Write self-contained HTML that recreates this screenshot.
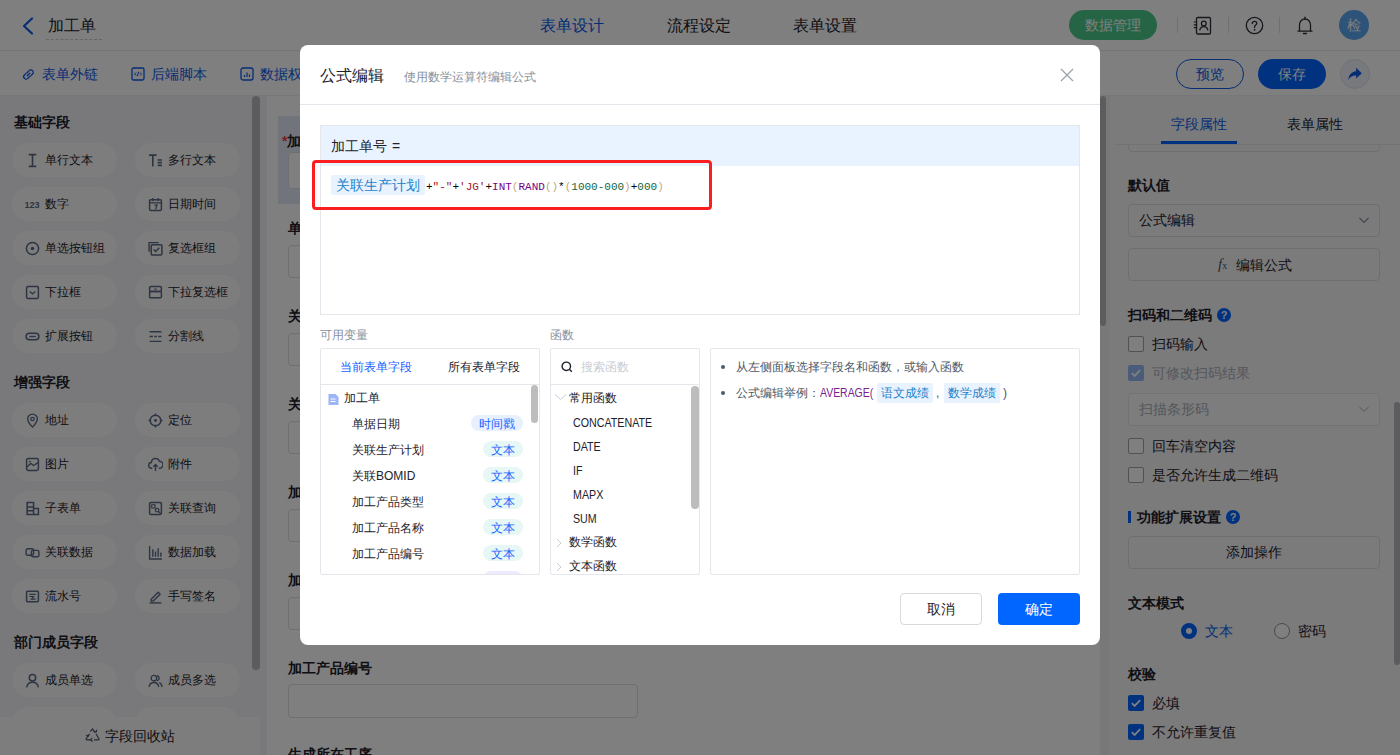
<!DOCTYPE html>
<html><head><meta charset="utf-8">
<style>
*{box-sizing:border-box;margin:0;padding:0}
html,body{width:1400px;height:755px;overflow:hidden;background:#fff;font-family:"Liberation Sans",sans-serif;color:#1d2129}
.a{position:absolute;white-space:nowrap}
.t14{font-size:14px;line-height:20px}
.t13{font-size:13px;line-height:18px}
.t12{font-size:12px;line-height:17px;margin-top:1px}
.fn{transform:scaleX(.89);transform-origin:0 0;margin-top:1px}
.t16{font-size:16px;line-height:22px}
#hdr{position:absolute;left:0;top:0;width:1400px;height:51px;background:#fff;border-bottom:1px solid #e8e9ec}
#tb{position:absolute;left:0;top:51px;width:1400px;height:45px;background:#fff;border-bottom:1px solid #eef0f2}
#left{position:absolute;left:0;top:96px;width:267px;height:659px;background:#f2f3f6}
#mid{position:absolute;left:267px;top:96px;width:833px;height:659px;background:#fff}
#card{position:absolute;left:278px;top:96px;width:822px;height:659px;background:#fff}
#right{position:absolute;left:1110px;top:96px;width:290px;height:659px;background:#f6f7f9}
#ov{position:absolute;left:0;top:0;width:1400px;height:755px;background:rgba(0,0,0,.5)}
#modal{position:absolute;left:300px;top:45px;width:800px;height:600px;background:#fff;border-radius:8px;overflow:hidden}
.blue{color:#0a5ae8}
.pill{position:absolute;height:34px;width:105px;border-radius:17px;background:#fbfbfc;font-size:12px;line-height:34px;color:#1d2129}
.pill svg{position:absolute;left:12.5px;top:9.5px}
.pill span{position:absolute;left:33px;top:0}
.sec{position:absolute;left:14px;font-size:14px;font-weight:bold;line-height:20px;color:#1d2129}
</style></head><body>
<!-- HEADER -->
<div id="hdr">
  <svg class="a" style="left:20px;top:16px" width="16" height="20" viewBox="0 0 16 20"><polyline points="12,2.5 4,10 12,17.5" fill="none" stroke="#0a5ae8" stroke-width="2.2" stroke-linecap="round" stroke-linejoin="round"/></svg>
  <div class="a t16" style="left:48px;top:15px;color:#1d2129">加工单</div>
  <div class="a" style="left:46px;top:39px;width:56px;border-top:1px dashed #c9cdd4"></div>
  <div class="a t16 blue" style="left:540px;top:15px">表单设计</div>
  <div class="a t16" style="left:667px;top:15px">流程设定</div>
  <div class="a t16" style="left:793px;top:15px">表单设置</div>
  <div class="a" style="left:1069px;top:10px;width:88px;height:30px;border-radius:15px;background:#4acb8b;color:#fff;font-size:14px;line-height:30px;text-align:center">数据管理</div>
  <div class="a" style="left:1177px;top:17px;width:1px;height:16px;background:#dcdfe4"></div>
  <div class="a" style="left:1228px;top:17px;width:1px;height:16px;background:#dcdfe4"></div>
  <div class="a" style="left:1279px;top:17px;width:1px;height:16px;background:#dcdfe4"></div>
  <svg class="a" style="left:1193px;top:16px" width="20" height="20" viewBox="0 0 20 20"><rect x="3.5" y="1.5" width="14" height="16.5" rx="1.2" fill="none" stroke="#2b2f36" stroke-width="1.3"/><path d="M0.8 6h3.4M0.8 8.8h3.4M0.8 11.6h3.4" stroke="#2b2f36" stroke-width="1.2"/><circle cx="10.8" cy="7.5" r="2.4" fill="none" stroke="#2b2f36" stroke-width="1.3"/><path d="M6.7 14.3c.5-2.4 2.2-3.6 4.1-3.6s3.6 1.2 4.1 3.6" fill="none" stroke="#2b2f36" stroke-width="1.3"/></svg>
  <svg class="a" style="left:1244px;top:16px" width="20" height="20" viewBox="0 0 20 20"><circle cx="10.5" cy="9.5" r="8.2" fill="none" stroke="#2b2f36" stroke-width="1.3"/><path d="M8.2 7.6c0-1.4 1-2.3 2.3-2.3s2.3.9 2.3 2.1c0 1.6-2.2 1.8-2.2 3.4v.7" fill="none" stroke="#2b2f36" stroke-width="1.3" stroke-linecap="round"/><circle cx="10.6" cy="13.8" r=".9" fill="#2b2f36"/></svg>
  <svg class="a" style="left:1295px;top:16px" width="20" height="20" viewBox="0 0 20 20"><path d="M4.5 15V8.8C4.5 5.6 6.8 3 10 3s5.5 2.6 5.5 5.8V15M3 15.2h14" fill="none" stroke="#2b2f36" stroke-width="1.3" stroke-linecap="round"/><path d="M10 1.2v1.6" stroke="#2b2f36" stroke-width="1.3" stroke-linecap="round"/><path d="M8.5 17.5h3" stroke="#2b2f36" stroke-width="1.3" stroke-linecap="round"/></svg>
  <div class="a" style="left:1339px;top:10px;width:30px;height:30px;border-radius:15px;background:#5aa6f0;color:#fff;font-size:14px;line-height:30px;text-align:center">检</div>
</div>
<!-- TOOLBAR -->
<div id="tb">
  <svg class="a" style="left:21px;top:16px" width="15" height="15" viewBox="0 0 15 15"><path d="M6.2 8.8l2.6-2.6M5.3 6.1L3.4 8a2.4 2.4 0 003.4 3.4l1.9-1.9M9.7 8.9l1.9-1.9a2.4 2.4 0 00-3.4-3.4L6.3 5.5" fill="none" stroke="#0a5ae8" stroke-width="1.3" stroke-linecap="round"/></svg>
  <div class="a t14 blue" style="left:42px;top:13px">表单外链</div>
  <svg class="a" style="left:131px;top:16px" width="14" height="14" viewBox="0 0 14 14"><rect x="1" y="1" width="12" height="12" rx="1.5" fill="none" stroke="#0a5ae8" stroke-width="1.3"/><path d="M5 5.5L3.5 7 5 8.5M9 5.5l1.5 1.5L9 8.5M7.7 4.8L6.3 9.2" fill="none" stroke="#0a5ae8" stroke-width="1"/></svg>
  <div class="a t14 blue" style="left:151px;top:13px">后端脚本</div>
  <svg class="a" style="left:240px;top:16px" width="14" height="14" viewBox="0 0 14 14"><rect x="1" y="1" width="12" height="12" rx="2" fill="none" stroke="#0a5ae8" stroke-width="1.3"/><path d="M4.5 10V8M7 10V5.5M9.5 10V7.5" stroke="#0a5ae8" stroke-width="1.2"/></svg>
  <div class="a t14 blue" style="left:260px;top:13px">数据权限</div>
  <div class="a" style="left:1176px;top:8px;width:68px;height:30px;border-radius:15px;border:1px solid #0a5ae8;color:#0a5ae8;font-size:14px;line-height:28px;text-align:center">预览</div>
  <div class="a" style="left:1258px;top:8px;width:68px;height:30px;border-radius:15px;background:#0064ff;color:#fff;font-size:14px;line-height:30px;text-align:center">保存</div>
  <div class="a" style="left:1340px;top:8px;width:30px;height:30px;border-radius:15px;border:1px solid #dde3ee;background:#eef2f8"></div>
  <svg class="a" style="left:1346px;top:14px" width="18" height="18" viewBox="0 0 16 16"><path d="M9 2.5l5 4.8-5 4.6V9.3C5.5 9.2 3.4 10.5 2 13.5 2.3 9 4.8 5.9 9 5.5z" fill="#0a5ae8"/></svg>
</div>
<div id="left">
  <div class="sec" style="top:16px">基础字段</div>
  <div class="sec" style="top:276px">增强字段</div>
  <div class="sec" style="top:536px">部门成员字段</div>
</div>
<div id="pills"><div class="pill" style="left:12px;top:143px"><svg width="15" height="15" viewBox="0 0 14 14"><path d="M3.5 1.5h7M3.5 12.5h7M7 1.5v11" stroke="#5a6a84" stroke-width="1.5" fill="none"/></svg><span>单行文本</span></div>
<div class="pill" style="left:135px;top:143px"><svg width="15" height="15" viewBox="0 0 14 14"><path d="M1 2h7M4.5 2v10.5M9 6.5h4M9 9h4M9 11.5h4" stroke="#5a6a84" stroke-width="1.5" fill="none"/></svg><span>多行文本</span></div>
<div class="pill" style="left:12px;top:187px"><svg width="15" height="15" viewBox="0 0 14 14"><text x="-0.5" y="10" font-family="Liberation Sans" font-weight="bold" font-size="8.5" fill="#5a6a84">123</text></svg><span>数字</span></div>
<div class="pill" style="left:135px;top:187px"><svg width="15" height="15" viewBox="0 0 14 14"><rect x="1.5" y="2.5" width="11" height="10" rx="1" stroke="#5a6a84" stroke-width="1.4" fill="none"/><path d="M4.5 1v3M9.5 1v3M1.5 5.5h11M6 7.5h2.5l-1.5 4" stroke="#5a6a84" stroke-width="1.2" fill="none"/></svg><span>日期时间</span></div>
<div class="pill" style="left:12px;top:231px"><svg width="15" height="15" viewBox="0 0 14 14"><circle cx="7" cy="7" r="5.7" stroke="#5a6a84" stroke-width="1.4" fill="none"/><circle cx="7" cy="7" r="1.6" fill="#5a6a84"/></svg><span>单选按钮组</span></div>
<div class="pill" style="left:135px;top:231px"><svg width="15" height="15" viewBox="0 0 14 14"><path d="M1 10V1.5h9" stroke="#5a6a84" stroke-width="1.3" fill="none"/><rect x="3" y="3.5" width="10" height="9.5" rx="1" stroke="#5a6a84" stroke-width="1.4" fill="none"/><path d="M5.3 8l1.8 1.8 3.5-3.6" stroke="#5a6a84" stroke-width="1.3" fill="none"/></svg><span>复选框组</span></div>
<div class="pill" style="left:12px;top:275px"><svg width="15" height="15" viewBox="0 0 14 14"><rect x="1.5" y="1.5" width="11" height="11" rx="1" stroke="#5a6a84" stroke-width="1.4" fill="none"/><path d="M4.5 6l2.5 2.3L9.5 6" stroke="#5a6a84" stroke-width="1.3" fill="none"/></svg><span>下拉框</span></div>
<div class="pill" style="left:135px;top:275px"><svg width="15" height="15" viewBox="0 0 14 14"><rect x="1.5" y="1.5" width="11" height="4.5" rx="1" stroke="#5a6a84" stroke-width="1.4" fill="none"/><rect x="1.5" y="6" width="11" height="6" rx="1" stroke="#5a6a84" stroke-width="1.4" fill="none"/><path d="M6 3.3l1 1 1-1" stroke="#5a6a84" stroke-width="1" fill="none"/></svg><span>下拉复选框</span></div>
<div class="pill" style="left:12px;top:319px"><svg width="15" height="15" viewBox="0 0 14 14"><rect x="1" y="4" width="12" height="6" rx="3" stroke="#5a6a84" stroke-width="1.4" fill="none"/><path d="M4 7h6" stroke="#5a6a84" stroke-width="1.3"/></svg><span>扩展按钮</span></div>
<div class="pill" style="left:135px;top:319px"><svg width="15" height="15" viewBox="0 0 14 14"><path d="M1.5 2.5h11M1.5 11.5h11M1.5 7h3M5.8 7h2.5M9.5 7h3" stroke="#5a6a84" stroke-width="1.3" fill="none"/></svg><span>分割线</span></div>
<div class="pill" style="left:12px;top:403px"><svg width="15" height="15" viewBox="0 0 14 14"><path d="M7 13.2C4 10 2.5 7.8 2.5 5.5a4.5 4.5 0 019 0C11.5 7.8 10 10 7 13.2z" stroke="#5a6a84" stroke-width="1.3" fill="none"/><circle cx="7" cy="5.6" r="1.6" stroke="#5a6a84" stroke-width="1.2" fill="none"/></svg><span>地址</span></div>
<div class="pill" style="left:135px;top:403px"><svg width="15" height="15" viewBox="0 0 14 14"><circle cx="7" cy="7" r="5" stroke="#5a6a84" stroke-width="1.4" fill="none"/><circle cx="7" cy="7" r="1.3" fill="#5a6a84"/><path d="M7 0.5v2.5M7 11v2.5M0.5 7H3M11 7h2.5" stroke="#5a6a84" stroke-width="1.3"/></svg><span>定位</span></div>
<div class="pill" style="left:12px;top:447px"><svg width="15" height="15" viewBox="0 0 14 14"><rect x="1.5" y="1.5" width="11" height="11" rx="1.5" stroke="#5a6a84" stroke-width="1.4" fill="none"/><path d="M2 9l3.5-3 2.5 2 4.5-3" stroke="#5a6a84" stroke-width="1.2" fill="none"/><circle cx="4.5" cy="4.3" r="0.9" fill="#5a6a84"/></svg><span>图片</span></div>
<div class="pill" style="left:135px;top:447px"><svg width="15" height="15" viewBox="0 0 14 14"><path d="M4 10.5H3.5a2.7 2.7 0 01-.3-5.4A3.8 3.8 0 0110.6 4a3.2 3.2 0 01.2 6.5H10" stroke="#5a6a84" stroke-width="1.3" fill="none"/><path d="M7 13V7.3M5 9l2-2 2 2" stroke="#5a6a84" stroke-width="1.3" fill="none"/></svg><span>附件</span></div>
<div class="pill" style="left:12px;top:491px"><svg width="15" height="15" viewBox="0 0 14 14"><path d="M2 1.5h6v11H2zM8 7h4.5v5.5H8M2 5.5h6M2 9h6" stroke="#5a6a84" stroke-width="1.4" fill="none"/></svg><span>子表单</span></div>
<div class="pill" style="left:135px;top:491px"><svg width="15" height="15" viewBox="0 0 14 14"><rect x="1.5" y="1.5" width="11" height="11" rx="1" stroke="#5a6a84" stroke-width="1.4" fill="none"/><path d="M3.5 3.5h3v3h-3z" stroke="#5a6a84" stroke-width="1.1" fill="none"/><circle cx="8.5" cy="8.5" r="1.7" stroke="#5a6a84" stroke-width="1.1" fill="none"/><path d="M9.8 9.8l2 2" stroke="#5a6a84" stroke-width="1.1"/></svg><span>关联查询</span></div>
<div class="pill" style="left:12px;top:535px"><svg width="15" height="15" viewBox="0 0 14 14"><rect x="1" y="3.5" width="7" height="6" rx="1.5" stroke="#5a6a84" stroke-width="1.3" fill="none"/><rect x="6" y="5" width="7" height="6" rx="1.5" stroke="#5a6a84" stroke-width="1.3" fill="none"/></svg><span>关联数据</span></div>
<div class="pill" style="left:135px;top:535px"><svg width="15" height="15" viewBox="0 0 14 14"><path d="M1.5 1v12h11.5M4.5 4v7M7 6v5M9.5 3v8M12 7v4" stroke="#5a6a84" stroke-width="1.3" fill="none"/></svg><span>数据加载</span></div>
<div class="pill" style="left:12px;top:579px"><svg width="15" height="15" viewBox="0 0 14 14"><rect x="1.5" y="2" width="11" height="10" rx="1" stroke="#5a6a84" stroke-width="1.4" fill="none"/><path d="M4 5h6M4 7h4l-2 2.5h4" stroke="#5a6a84" stroke-width="1.1" fill="none"/></svg><span>流水号</span></div>
<div class="pill" style="left:135px;top:579px"><svg width="15" height="15" viewBox="0 0 14 14"><path d="M3 9.5l6.5-6.5 1.8 1.8-6.5 6.5H3z" stroke="#5a6a84" stroke-width="1.3" fill="none"/><path d="M1.5 13h11" stroke="#5a6a84" stroke-width="1.3"/></svg><span>手写签名</span></div>
<div class="pill" style="left:12px;top:663px"><svg width="15" height="15" viewBox="0 0 14 14"><circle cx="7" cy="4.5" r="3" stroke="#5a6a84" stroke-width="1.4" fill="none"/><path d="M1.5 13.5c.5-3 2.7-4.8 5.5-4.8s5 1.8 5.5 4.8" stroke="#5a6a84" stroke-width="1.4" fill="none"/></svg><span>成员单选</span></div>
<div class="pill" style="left:135px;top:663px"><svg width="15" height="15" viewBox="0 0 14 14"><circle cx="5.5" cy="4.8" r="2.6" stroke="#5a6a84" stroke-width="1.3" fill="none"/><path d="M1 13c.4-2.7 2.2-4.2 4.5-4.2S9.6 10.3 10 13M8.5 2.3a2.6 2.6 0 010 5M10.5 8.9c1.5.6 2.4 2 2.6 4" stroke="#5a6a84" stroke-width="1.3" fill="none"/></svg><span>成员多选</span></div>
<div class="pill" style="left:12px;top:707px"><svg width="15" height="15" viewBox="0 0 14 14"><circle cx="7" cy="4.5" r="3" stroke="#5a6a84" stroke-width="1.4" fill="none"/><path d="M1.5 13.5c.5-3 2.7-4.8 5.5-4.8s5 1.8 5.5 4.8" stroke="#5a6a84" stroke-width="1.4" fill="none"/></svg><span>部门单选</span></div>
<div class="pill" style="left:135px;top:707px"><svg width="15" height="15" viewBox="0 0 14 14"><circle cx="5.5" cy="4.8" r="2.6" stroke="#5a6a84" stroke-width="1.3" fill="none"/><path d="M1 13c.4-2.7 2.2-4.2 4.5-4.2S9.6 10.3 10 13M8.5 2.3a2.6 2.6 0 010 5M10.5 8.9c1.5.6 2.4 2 2.6 4" stroke="#5a6a84" stroke-width="1.3" fill="none"/></svg><span>部门多选</span></div></div>
<div class="a" style="left:252px;top:96px;width:8px;height:574px;border-radius:4px;background:#b8b9bc"></div>
<div class="a" style="left:0;top:717px;width:260px;height:38px;background:#fafbfc"></div>
<svg class="a" style="left:85px;top:728px" width="15" height="14" viewBox="0 0 15 14"><path d="M5.6 3.2L7.5 0.8l2 3.1M11.3 6.3l2.6 4.4c.3.6 0 1.2-.7 1.2H9.6M5.3 11.9H1.9c-.7 0-1-.6-.7-1.2l2.1-3.6" fill="none" stroke="#4e5969" stroke-width="1.2" stroke-linejoin="round" stroke-linecap="round"/><path d="M9.2 3.6l1.9.5.5-1.9M4.2 6.4l-.9 1.7-1.8-.8M7.3 13.2l-1.7-1.3 1.3-1.5" fill="none" stroke="#4e5969" stroke-width="1.2" stroke-linejoin="round" stroke-linecap="round"/></svg>
<div class="a t14" style="left:105px;top:726px;color:#1d2129">字段回收站</div>

<div id="card">
  <div class="a" style="left:0;top:20px;width:822px;height:88px;background:#e3eaf7"></div>
  <div class="a t14" style="left:4px;top:35px;font-weight:bold"><span style="color:#f53f3f">*</span>加工单号</div>
  <div class="a" style="left:10px;top:56px;width:350px;height:37px;border:1px solid #dcdfe6;border-radius:4px;background:#fff"></div>
  <div class="a t14" style="left:10px;top:122px;font-weight:bold">单据日期</div>
  <div class="a" style="left:10px;top:149px;width:350px;height:33px;border:1px solid #dcdfe6;border-radius:4px;background:#fff"></div>
  <div class="a t14" style="left:10px;top:210px;font-weight:bold">关联生产计划</div>
  <div class="a" style="left:10px;top:237px;width:350px;height:33px;border:1px solid #dcdfe6;border-radius:4px;background:#fff"></div>
  <div class="a t14" style="left:10px;top:298px;font-weight:bold">关联BOMID</div>
  <div class="a" style="left:10px;top:325px;width:350px;height:33px;border:1px solid #dcdfe6;border-radius:4px;background:#fff"></div>
  <div class="a t14" style="left:10px;top:386px;font-weight:bold">加工产品类型</div>
  <div class="a" style="left:10px;top:413px;width:350px;height:33px;border:1px solid #dcdfe6;border-radius:4px;background:#fff"></div>
  <div class="a t14" style="left:10px;top:474px;font-weight:bold">加工产品名称</div>
  <div class="a" style="left:10px;top:501px;width:350px;height:33px;border:1px solid #dcdfe6;border-radius:4px;background:#fff"></div>
  <div class="a t14" style="left:10px;top:562px;font-weight:bold">加工产品编号</div>
  <div class="a" style="left:10px;top:588px;width:350px;height:34px;border:1px solid #dcdfe6;border-radius:4px;background:#fff"></div>
  <div class="a t14" style="left:10px;top:648px;font-weight:bold">生成所在工序</div>
</div>
<div class="a" style="left:1100px;top:96px;width:10px;height:659px;background:#f0f1f3"></div>
<div class="a" style="left:1100px;top:96px;width:6px;height:230px;border-radius:3px;background:#b8b9bc"></div>

<div id="right">
  <div class="a t14 blue" style="left:61px;top:18px">字段属性</div>
  <div class="a t14" style="left:177px;top:18px">表单属性</div>
  <div class="a" style="left:51px;top:45px;width:76px;height:3px;background:#0064ff"></div>
  <div class="a" style="left:4px;top:48px;width:286px;height:1px;background:#e5e6eb"></div>
  <div class="a" style="left:18px;top:20px;width:252px;height:36px;border:1px solid #dcdfe6;border-radius:4px;clip-path:inset(29px 0 0 0)"></div>
  <div class="a t14" style="left:18px;top:79px;font-weight:bold">默认值</div>
  <div class="a" style="left:18px;top:108px;width:252px;height:33px;border:1px solid #dcdfe6;border-radius:4px"></div>
  <div class="a t14" style="left:29px;top:114px">公式编辑</div>
  <svg class="a" style="left:248px;top:119px" width="12" height="10" viewBox="0 0 12 10"><path d="M1.5 3l4.5 4.5L10.5 3" fill="none" stroke="#86909c" stroke-width="1.2"/></svg>
  <div class="a" style="left:18px;top:152px;width:252px;height:33px;border:1px solid #dcdfe6;border-radius:4px"></div>
  <div class="a" style="left:108px;top:159px;font-family:'Liberation Serif',serif;font-style:italic;font-size:15px;line-height:18px;color:#4e5969">f<span style="font-size:10px;font-style:normal">x</span></div>
  <div class="a t14" style="left:126px;top:159px">编辑公式</div>
  <div class="a t14" style="left:18px;top:209px;font-weight:bold">扫码和二维码</div>
  <div class="a" style="left:107px;top:212px;width:14px;height:14px;border-radius:7px;background:#0064ff;color:#fff;font-size:11px;line-height:14px;text-align:center;font-weight:bold">?</div>
  <div class="a" style="left:18px;top:240px;width:16px;height:16px;border:1px solid #a0a5ad;border-radius:2px;background:#fff"></div>
  <div class="a t14" style="left:42px;top:238px">扫码输入</div>
  <div class="a" style="left:18px;top:269px;width:16px;height:16px;border-radius:2px;background:#94b8f5"></div>
  <svg class="a" style="left:18px;top:269px" width="16" height="16" viewBox="0 0 16 16"><path d="M3.8 8.2l2.8 2.8 5.6-5.8" fill="none" stroke="#fff" stroke-width="1.8"/></svg>
  <div class="a t14" style="left:42px;top:267px;color:#a9aeb8">可修改扫码结果</div>
  <div class="a" style="left:18px;top:297px;width:252px;height:33px;border:1px solid #e5e6eb;border-radius:4px;background:#fafafa"></div>
  <div class="a t14" style="left:29px;top:303px;color:#a9aeb8">扫描条形码</div>
  <svg class="a" style="left:248px;top:308px" width="12" height="10" viewBox="0 0 12 10"><path d="M1.5 3l4.5 4.5L10.5 3" fill="none" stroke="#c9cdd4" stroke-width="1.2"/></svg>
  <div class="a" style="left:18px;top:342px;width:16px;height:16px;border:1px solid #a0a5ad;border-radius:2px;background:#fff"></div>
  <div class="a t14" style="left:42px;top:340px">回车清空内容</div>
  <div class="a" style="left:18px;top:371px;width:16px;height:16px;border:1px solid #a0a5ad;border-radius:2px;background:#fff"></div>
  <div class="a t14" style="left:42px;top:369px">是否允许生成二维码</div>
  <div class="a" style="left:18px;top:415px;width:3px;height:12px;background:#0064ff"></div>
  <div class="a t14" style="left:27px;top:411px;font-weight:bold">功能扩展设置</div>
  <div class="a" style="left:116px;top:414px;width:14px;height:14px;border-radius:7px;background:#0064ff;color:#fff;font-size:11px;line-height:14px;text-align:center;font-weight:bold">?</div>
  <div class="a" style="left:18px;top:440px;width:252px;height:33px;border:1px solid #dcdfe6;border-radius:4px;text-align:center;font-size:14px;line-height:31px">添加操作</div>
  <div class="a t14" style="left:18px;top:497px;font-weight:bold">文本模式</div>
  <div class="a" style="left:71px;top:527px;width:16px;height:16px;border-radius:8px;border:5px solid #0064ff;background:#fff"></div>
  <div class="a t14 blue" style="left:95px;top:525px">文本</div>
  <div class="a" style="left:164px;top:527px;width:16px;height:16px;border-radius:8px;border:1px solid #8f959e;background:#fff"></div>
  <div class="a t14" style="left:188px;top:525px">密码</div>
  <div class="a t14" style="left:18px;top:568px;font-weight:bold">校验</div>
  <div class="a" style="left:18px;top:599px;width:16px;height:16px;border-radius:2px;background:#0064ff"></div>
  <svg class="a" style="left:18px;top:599px" width="16" height="16" viewBox="0 0 16 16"><path d="M3.8 8.2l2.8 2.8 5.6-5.8" fill="none" stroke="#fff" stroke-width="1.8"/></svg>
  <div class="a t14" style="left:42px;top:597px">必填</div>
  <div class="a" style="left:18px;top:628px;width:16px;height:16px;border-radius:2px;background:#0064ff"></div>
  <svg class="a" style="left:18px;top:628px" width="16" height="16" viewBox="0 0 16 16"><path d="M3.8 8.2l2.8 2.8 5.6-5.8" fill="none" stroke="#fff" stroke-width="1.8"/></svg>
  <div class="a t14" style="left:42px;top:626px">不允许重复值</div>
  <div class="a" style="left:284px;top:306px;width:6px;height:263px;border-radius:3px;background:#b8b9bc"></div>
</div>
<div id="ov"></div>
<div id="modal">
  <div class="a t16" style="left:20px;top:20px;color:#1d2129">公式编辑</div>
  <div class="a t12" style="left:104px;top:23px;color:#86909c">使用数学运算符编辑公式</div>
  <svg class="a" style="left:760px;top:23px" width="14" height="14" viewBox="0 0 14 14"><path d="M1 1l12 12M13 1L1 13" stroke="#9aa0a8" stroke-width="1.2"/></svg>
  <div class="a" style="left:0;top:59px;width:800px;height:1px;background:#e5e6eb"></div>
  <!-- formula box -->
  <div class="a" style="left:20px;top:80px;width:760px;height:190px;border:1px solid #e5e6eb;background:#fff"></div>
  <div class="a" style="left:21px;top:81px;width:758px;height:40px;background:#e8f3ff"></div>
  <div class="a t14" style="left:31px;top:91px;color:#1d2129">加工单号 <span style="margin-left:1px">=</span></div>
  <div class="a" style="left:31px;top:130px;width:94px;height:20px;border-radius:2px;background:#e8f3ff"></div>
  <div class="a t14" style="left:36px;top:130px;color:#1e80c8">关联生产计划</div>
  <div class="a" style="left:126px;top:134px;font-family:'Liberation Mono',monospace;font-size:11px;line-height:16px;color:#000">+<span style="color:#a31515">"-"</span>+<span style="color:#a31515">'JG'</span>+<span style="color:#770088">INT</span><span style="color:#c8a878">(</span><span style="color:#770088">RAND</span><span style="color:#c8a878">()</span>*<span style="color:#c8a878">(</span><span style="color:#116644">1000-000</span><span style="color:#c8a878">)</span>+<span style="color:#116644">000</span><span style="color:#c8a878">)</span></div>
  <div class="a" style="left:12px;top:115px;width:400px;height:50px;border:3px solid #fa1e1e;border-radius:4px"></div>
  <!-- labels -->
  <div class="a t12" style="left:20px;top:281px;color:#86909c">可用变量</div>
  <div class="a t12" style="left:250px;top:281px;color:#86909c">函数</div>
  <!-- var panel -->
  <div class="a" style="left:20px;top:303px;width:220px;height:227px;border:1px solid #e5e6eb;border-radius:2px"></div>
  <div class="a t12" style="left:40px;top:313px;color:#1a5cff">当前表单字段</div>
  <div class="a t12" style="left:148px;top:313px;color:#1d2129">所有表单字段</div>
  <div class="a" style="left:21px;top:339px;width:218px;height:1px;background:#e5e6eb"></div>
  <svg class="a" style="left:28px;top:349px" width="11" height="11" viewBox="0 0 11 11"><path d="M0.5 0h7l3 3v8h-10z" fill="#9db4f5"/><path d="M2.5 5h5M2.5 7.5h5" stroke="#fff" stroke-width="1"/></svg>
  <div class="a t12" style="left:44px;top:344px;color:#1d2129">加工单</div>
  <div class="a" style="left:21px;top:340px;width:218px;height:189px;overflow:hidden">
    <div class="a t12" style="left:31px;top:30px;color:#1d2129">单据日期</div>
    <div class="a" style="left:150px;top:30px;width:52px;height:16px;border-radius:8px;background:#e8f0fe;font-size:12px;line-height:16px;text-align:center;color:#1a66ff"><span style="position:relative;top:0.5px">时间戳</span></div>
    <div class="a t12" style="left:31px;top:56px;color:#1d2129">关联生产计划</div>
    <div class="a" style="left:162px;top:56px;width:40px;height:16px;border-radius:8px;background:#e6f7f5;font-size:12px;line-height:16px;text-align:center;color:#1a66ff"><span style="position:relative;top:0.5px">文本</span></div>
    <div class="a t12" style="left:31px;top:82px;color:#1d2129">关联BOMID</div>
    <div class="a" style="left:162px;top:82px;width:40px;height:16px;border-radius:8px;background:#e6f7f5;font-size:12px;line-height:16px;text-align:center;color:#1a66ff"><span style="position:relative;top:0.5px">文本</span></div>
    <div class="a t12" style="left:31px;top:108px;color:#1d2129">加工产品类型</div>
    <div class="a" style="left:162px;top:108px;width:40px;height:16px;border-radius:8px;background:#e6f7f5;font-size:12px;line-height:16px;text-align:center;color:#1a66ff"><span style="position:relative;top:0.5px">文本</span></div>
    <div class="a t12" style="left:31px;top:134px;color:#1d2129">加工产品名称</div>
    <div class="a" style="left:162px;top:134px;width:40px;height:16px;border-radius:8px;background:#e6f7f5;font-size:12px;line-height:16px;text-align:center;color:#1a66ff"><span style="position:relative;top:0.5px">文本</span></div>
    <div class="a t12" style="left:31px;top:160px;color:#1d2129">加工产品编号</div>
    <div class="a" style="left:162px;top:160px;width:40px;height:16px;border-radius:8px;background:#e6f7f5;font-size:12px;line-height:16px;text-align:center;color:#1a66ff"><span style="position:relative;top:0.5px">文本</span></div>
    <div class="a t12" style="left:31px;top:186px;color:#1d2129">加工产品规格</div>
    <div class="a" style="left:162px;top:186px;width:40px;height:16px;border-radius:8px;background:#efeaff;font-size:12px;line-height:16px;text-align:center;color:#1a66ff"><span style="position:relative;top:0.5px">数字</span></div>
  </div>
  <div class="a" style="left:231px;top:340px;width:7px;height:38px;border-radius:4px;background:#bdbdbd"></div>
  <!-- func panel -->
  <div class="a" style="left:250px;top:303px;width:150px;height:227px;border:1px solid #e5e6eb;border-radius:2px"></div>
  <svg class="a" style="left:261px;top:316px" width="12" height="12" viewBox="0 0 12 12"><circle cx="5.3" cy="5.3" r="4.2" fill="none" stroke="#1d2129" stroke-width="1.4"/><path d="M8.3 8.3l2.5 2.5" stroke="#1d2129" stroke-width="1.4"/></svg>
  <div class="a t12" style="left:281px;top:313px;color:#c9cdd4">搜索函数</div>
  <div class="a" style="left:251px;top:339px;width:148px;height:1px;background:#e5e6eb"></div>
  <svg class="a" style="left:254px;top:348px" width="13" height="8" viewBox="0 0 13 8"><path d="M1 1.5l5.5 5 5.5-5" fill="none" stroke="#c9cdd4" stroke-width="1"/></svg>
  <div class="a t12" style="left:269px;top:344px;color:#1d2129">常用函数</div>
  <div class="a t12" style="left:273px;top:368px;color:#1d2129" ><span class="fn" style="display:inline-block">CONCATENATE</span></div>
  <div class="a t12" style="left:273px;top:392px;color:#1d2129" ><span class="fn" style="display:inline-block">DATE</span></div>
  <div class="a t12" style="left:273px;top:416px;color:#1d2129" ><span class="fn" style="display:inline-block">IF</span></div>
  <div class="a t12" style="left:273px;top:440px;color:#1d2129" ><span class="fn" style="display:inline-block">MAPX</span></div>
  <div class="a t12" style="left:273px;top:464px;color:#1d2129" ><span class="fn" style="display:inline-block">SUM</span></div>
  <svg class="a" style="left:256px;top:493px" width="6" height="10" viewBox="0 0 6 10"><path d="M1 1l4 4-4 4" fill="none" stroke="#c9cdd4" stroke-width="1"/></svg>
  <div class="a t12" style="left:269px;top:488px;color:#1d2129">数学函数</div>
  <svg class="a" style="left:256px;top:517px" width="6" height="10" viewBox="0 0 6 10"><path d="M1 1l4 4-4 4" fill="none" stroke="#c9cdd4" stroke-width="1"/></svg>
  <div class="a t12" style="left:269px;top:512px;color:#1d2129">文本函数</div>
  <div class="a" style="left:391px;top:341px;width:8px;height:123px;border-radius:4px;background:#bdbdbd"></div>
  <!-- desc panel -->
  <div class="a" style="left:410px;top:303px;width:370px;height:227px;border:1px solid #e5e6eb;border-radius:2px"></div>
  <div class="a" style="left:421px;top:320px;width:4px;height:4px;border-radius:2px;background:#4e5969"></div>
  <div class="a t12" style="left:436px;top:313px;color:#4e5969">从左侧面板选择字段名和函数，或输入函数</div>
  <div class="a" style="left:421px;top:346px;width:4px;height:4px;border-radius:2px;background:#4e5969"></div>
  <div class="a t12" style="left:436px;top:339px;color:#4e5969">公式编辑举例：</div>
  <div class="a t12" style="left:520px;top:339px;color:#7a1f8f"><span id="avg" style="display:inline-block;transform:scaleX(.87);transform-origin:0 0">AVERAGE(</span></div>
  <div class="a" style="left:577px;top:338px;width:56px;height:20px;border-radius:2px;background:#e8f3ff"></div>
  <div class="a t12" style="left:581px;top:339px;color:#1e80c8">语文成绩</div>
  <div class="a t12" style="left:636px;top:339px;color:#4e5969">,</div>
  <div class="a" style="left:644px;top:338px;width:56px;height:20px;border-radius:2px;background:#e8f3ff"></div>
  <div class="a t12" style="left:648px;top:339px;color:#1e80c8">数学成绩</div>
  <div class="a t12" style="left:703px;top:339px;color:#4e5969">)</div>
  <!-- buttons -->
  <div class="a" style="left:600px;top:548px;width:82px;height:32px;border:1px solid #d9d9d9;border-radius:4px;font-size:14px;line-height:30px;text-align:center;color:#1d2129">取消</div>
  <div class="a" style="left:698px;top:548px;width:82px;height:32px;border-radius:4px;background:#0066ff;font-size:14px;line-height:32px;text-align:center;color:#fff">确定</div>
</div>
</body></html>
